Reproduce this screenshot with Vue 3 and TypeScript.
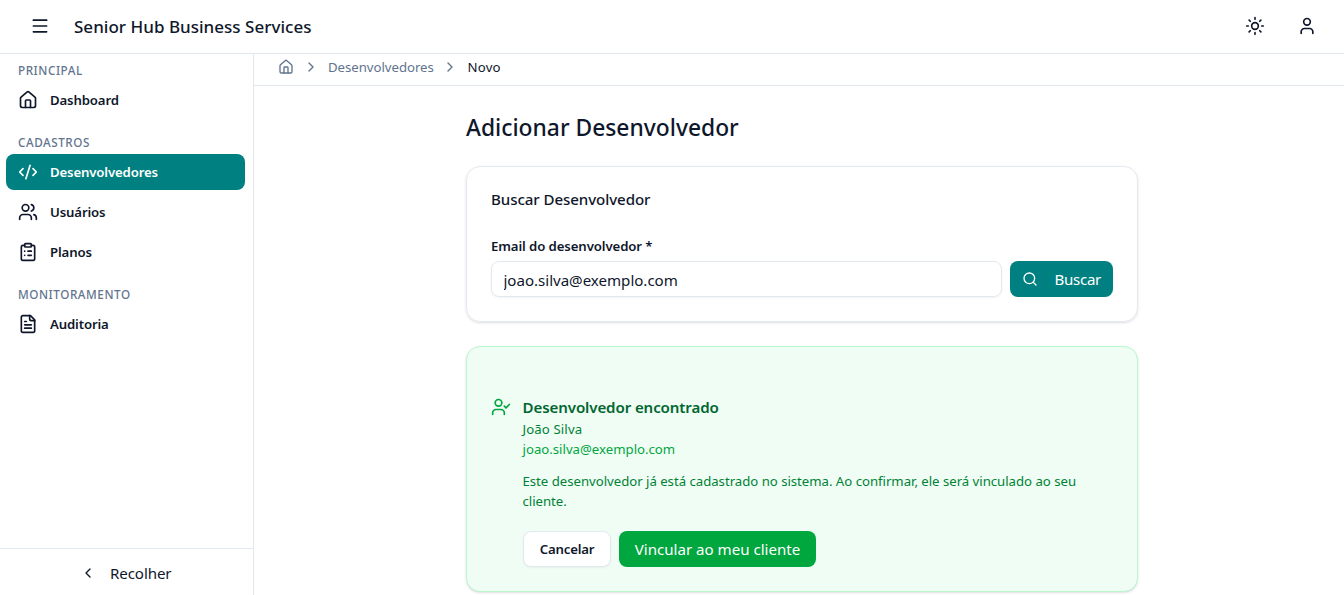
<script setup lang="ts">
import { ref } from 'vue'

interface NavItem {
  label: string
  icon: string[]
}
interface NavSection {
  title: string
  items: NavItem[]
}

const house = [
  'M15 21v-8a1 1 0 0 0-1-1h-4a1 1 0 0 0-1 1v8',
  'M3 10a2 2 0 0 1 .709-1.528l7-5.999a2 2 0 0 1 2.582 0l7 5.999A2 2 0 0 1 21 10v9a2 2 0 0 1-2 2H5a2 2 0 0 1-2-2z',
]

const sections: NavSection[] = [
  { title: 'PRINCIPAL', items: [{ label: 'Dashboard', icon: house }] },
  {
    title: 'CADASTROS',
    items: [
      { label: 'Desenvolvedores', icon: ['m18 16 4-4-4-4', 'm6 8-4 4 4 4', 'm14.5 4-5 16'] },
      {
        label: 'Usuários',
        icon: [
          'M16 21v-2a4 4 0 0 0-4-4H6a4 4 0 0 0-4 4v2',
          'M16 3.128a4 4 0 0 1 0 7.744',
          'M22 21v-2a4 4 0 0 0-3-3.87',
          'M5 7a4 4 0 1 0 8 0a4 4 0 1 0-8 0',
        ],
      },
      {
        label: 'Planos',
        icon: [
          'M9 2h6a1 1 0 0 1 1 1v2a1 1 0 0 1-1 1H9a1 1 0 0 1-1-1V3a1 1 0 0 1 1-1z',
          'M16 4h2a2 2 0 0 1 2 2v14a2 2 0 0 1-2 2H6a2 2 0 0 1-2-2V6a2 2 0 0 1 2-2h2',
          'M12 11h4',
          'M12 16h4',
          'M8 11h.01',
          'M8 16h.01',
        ],
      },
    ],
  },
  {
    title: 'MONITORAMENTO',
    items: [
      {
        label: 'Auditoria',
        icon: [
          'M15 2H6a2 2 0 0 0-2 2v16a2 2 0 0 0 2 2h12a2 2 0 0 0 2-2V7Z',
          'M14 2v4a2 2 0 0 0 2 2h4',
          'M10 9H8',
          'M16 13H8',
          'M16 17H8',
        ],
      },
    ],
  },
]

const active = ref('Desenvolvedores')
const email = ref('joao.silva@exemplo.com')
</script>

<template>
  <div class="app">
    <header class="topbar">
      <button class="icon-btn" aria-label="Menu">
        <svg class="ico i20" viewBox="0 0 24 24"><path d="M4 5h16M4 12h16M4 19h16" /></svg>
      </button>
      <span class="brand">Senior Hub Business Services</span>
      <div class="actions">
        <button class="icon-btn" aria-label="Tema">
          <svg class="ico i20" viewBox="0 0 24 24">
            <circle cx="12" cy="12" r="4" />
            <path d="M12 2v2M12 20v2M4.93 4.93l1.41 1.41M17.66 17.66l1.41 1.41M2 12h2M20 12h2M6.34 17.66l-1.41 1.41M19.07 4.93l-1.41 1.41" />
          </svg>
        </button>
        <button class="icon-btn" aria-label="Conta">
          <svg class="ico i20" viewBox="0 0 24 24">
            <path d="M19 21v-2a4 4 0 0 0-4-4H9a4 4 0 0 0-4 4v2" />
            <circle cx="12" cy="7" r="4" />
          </svg>
        </button>
      </div>
    </header>

    <div class="body">
      <aside class="sidebar">
        <nav class="nav">
          <section v-for="s in sections" :key="s.title">
            <div class="section-title">{{ s.title }}</div>
            <div class="items">
              <a
                v-for="i in s.items"
                :key="i.label"
                class="item"
                :class="{ active: i.label === active }"
                @click="active = i.label"
              >
                <svg class="ico i20" viewBox="0 0 24 24"><path v-for="d in i.icon" :key="d" :d="d" /></svg>
                <span>{{ i.label }}</span>
              </a>
            </div>
          </section>
        </nav>
        <button class="collapse">
          <svg class="ico i16" viewBox="0 0 24 24"><path d="m15 18-6-6 6-6" /></svg>
          <span>Recolher</span>
        </button>
      </aside>

      <div class="content">
        <div class="crumbs">
          <svg class="ico i16" viewBox="0 0 24 24"><path v-for="d in house" :key="d" :d="d" /></svg>
          <svg class="ico i16 sep" viewBox="0 0 24 24"><path d="m9 18 6-6-6-6" /></svg>
          <span class="crumb-dev">Desenvolvedores</span>
          <svg class="ico i16 sep" viewBox="0 0 24 24"><path d="m9 18 6-6-6-6" /></svg>
          <span class="crumb-now">Novo</span>
        </div>

        <main class="main">
          <h1>Adicionar Desenvolvedor</h1>

          <section class="card search">
            <h2>Buscar Desenvolvedor</h2>
            <label for="email">Email do desenvolvedor *</label>
            <div class="row">
              <input id="email" v-model="email" type="text" />
              <button class="btn primary">
                <svg class="ico i16" viewBox="0 0 24 24"><path d="m21 21-4.34-4.34" /><circle cx="11" cy="11" r="8" /></svg>
                <span>Buscar</span>
              </button>
            </div>
          </section>

          <section class="card found">
            <svg class="ico i20 found-ico" viewBox="0 0 24 24">
              <path d="m16 11 2 2 4-4" />
              <path d="M16 21v-2a4 4 0 0 0-4-4H6a4 4 0 0 0-4 4v2" />
              <circle cx="9" cy="7" r="4" />
            </svg>
            <div class="found-body">
              <h3>Desenvolvedor encontrado</h3>
              <p class="name">João Silva</p>
              <p class="mail">joao.silva@exemplo.com</p>
              <p class="desc">
                Este desenvolvedor já está cadastrado no sistema. Ao confirmar, ele será vinculado ao seu<br />cliente.
              </p>
              <div class="buttons">
                <button class="btn outline">Cancelar</button>
                <button class="btn success">Vincular ao meu cliente</button>
              </div>
            </div>
          </section>
        </main>
      </div>
    </div>
  </div>
</template>

<style>
html,
body {
  margin: 0;
  overflow: hidden;
  background: #fff;
}
</style>

<style scoped>
.app {
  height: 595px;
  display: flex;
  flex-direction: column;
  overflow: hidden;
  background: #fff;
  color: #0f172b;
  font-family: 'Segoe UI', 'Noto Sans', 'Open Sans', sans-serif;
  font-size: 13.2px;
  line-height: 20px;
  white-space: nowrap;
}
.app *,
.app {
  box-sizing: border-box;
}
button,
input {
  font: inherit;
  color: inherit;
  margin: 0;
  padding: 0;
  border: 0;
  background: none;
}
h1,
h2,
h3,
p {
  margin: 0;
}
.ico {
  flex: none;
  display: block;
  fill: none;
  stroke: currentColor;
  stroke-width: 2;
  stroke-linecap: round;
  stroke-linejoin: round;
}
.i20 {
  width: 20px;
  height: 20px;
}
.i16 {
  width: 16px;
  height: 16px;
}
.topbar {
  flex: none;
  height: 54px;
  border-bottom: 1px solid #e2e8f0;
  display: flex;
  align-items: center;
  padding: 0 19px 1px 22px;
}
.icon-btn {
  width: 36px;
  height: 36px;
  display: flex;
  align-items: center;
  justify-content: center;
}
.brand {
  margin-left: 16px;
  padding-top: 2px;
  font-size: 17px;
  line-height: 28px;
  font-weight: 550;
  letter-spacing: 0.02px;
}
.actions {
  margin-left: auto;
  display: flex;
  gap: 16px;
}
.body {
  flex: 1;
  display: flex;
  min-height: 0;
}
.sidebar {
  flex: none;
  width: 254px;
  border-right: 1px solid #e2e8f0;
  display: flex;
  flex-direction: column;
}
.nav {
  flex: 1;
  padding: 4px 8px 0 6px;
  display: flex;
  flex-direction: column;
  gap: 12px;
}
.section-title {
  height: 24px;
  padding-left: 12px;
  font-size: 11.7px;
  line-height: 25px;
  font-weight: 500;
  letter-spacing: 0.55px;
  color: #62748e;
}
.items {
  display: flex;
  flex-direction: column;
  gap: 4px;
}
.item {
  height: 36px;
  border-radius: 8px;
  padding: 0 12px;
  display: flex;
  align-items: center;
  gap: 12px;
  font-weight: 600;
  letter-spacing: -0.14px;
}
.item.active {
  background: #008080;
  color: #fff;
}
.collapse {
  flex: none;
  height: 47px;
  border-top: 1px solid #e2e8f0;
  display: flex;
  align-items: center;
  gap: 14px;
  padding: 1px 0 0 80px;
  font-size: 15.1px;
  letter-spacing: -0.1px;
}
.content {
  flex: 1;
  min-width: 0;
}
.crumbs {
  height: 32px;
  border-bottom: 1px solid #e2e8f0;
  padding: 0 24px 5px;
  display: flex;
  align-items: center;
  color: #62748e;
}
.crumbs .sep {
  margin: 0 9px;
}
.crumb-dev {
  width: 105px;
  letter-spacing: -0.03px;
}
.crumb-now {
  color: #0f172b;
  letter-spacing: 0.2px;
  padding-left: 0.5px;
}
.main {
  width: 672px;
  margin: 0 0 0 212px;
  padding-top: 26px;
}
h1 {
  font-size: 22.8px;
  line-height: 32px;
  font-weight: 550;
  letter-spacing: 0.01px;
}
.card {
  border: 1px solid #e2e8f0;
  border-radius: 14px;
  padding: 0 24px;
  box-shadow: 0 1px 3px rgba(0, 0, 0, 0.1), 0 1px 2px -1px rgba(0, 0, 0, 0.1);
}
.search {
  margin-top: 22px;
  height: 156px;
  padding-top: 20px;
}
h2 {
  font-size: 15.1px;
  line-height: 24px;
  font-weight: 550;
  letter-spacing: -0.08px;
}
label {
  display: block;
  margin-top: 25px;
  font-weight: 600;
  letter-spacing: -0.1px;
}
.row {
  display: flex;
  gap: 8px;
  margin-top: 5px;
}
input {
  flex: 1;
  min-width: 0;
  height: 36px;
  border: 1px solid #e2e8f0;
  border-radius: 8px;
  padding: 2px 12px 0 11.5px;
  font-size: 15.1px;
  letter-spacing: -0.02px;
  box-shadow: 0 1px 2px rgba(0, 0, 0, 0.05);
}
.btn {
  height: 36px;
  border-radius: 8px;
  display: flex;
  align-items: center;
  justify-content: center;
  font-size: 15.1px;
}
.primary {
  width: 103px;
  background: #008080;
  color: #fff;
  justify-content: flex-start;
  padding-left: 12px;
  gap: 16.5px;
  letter-spacing: -0.3px;
}
.found {
  margin-top: 24px;
  height: 246px;
  padding-top: 48px;
  display: flex;
  gap: 11.5px;
  background: #f0fdf4;
  border-color: #b9f8cf;
}
.found-ico {
  color: #00a63e;
  margin-top: 2px;
}
h3 {
  font-size: 15.1px;
  line-height: 24px;
  font-weight: 600;
  letter-spacing: -0.11px;
  color: #016630;
}
.name,
.desc {
  color: #008236;
}
.name {
  letter-spacing: 0.12px;
}
.mail {
  color: #00a63e;
}
.desc {
  margin-top: 12px;
  letter-spacing: -0.02px;
}
.buttons {
  display: flex;
  gap: 8px;
  margin: 20px 0 0 0.5px;
}
.outline {
  width: 88px;
  background: #fff;
  border: 1px solid #e2e8f0;
  box-shadow: 0 1px 2px rgba(0, 0, 0, 0.05);
  font-size: 13.2px;
  font-weight: 600;
  letter-spacing: -0.2px;
}
.success {
  width: 197px;
  background: #00a63e;
  color: #fff;
}
</style>
